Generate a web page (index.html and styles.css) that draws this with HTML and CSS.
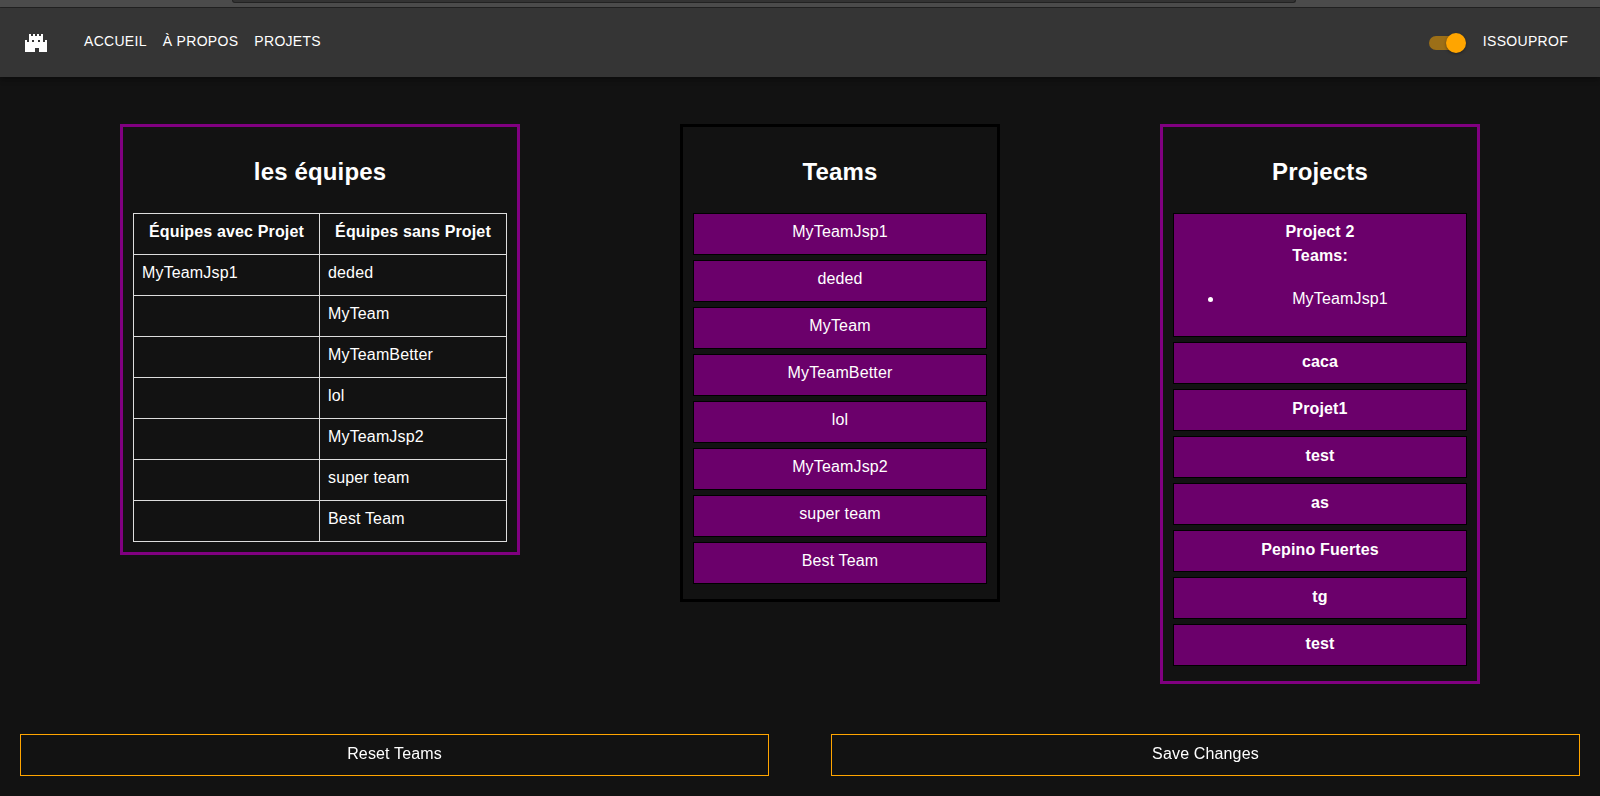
FILE: index.html
```html
<html>
<head>
    <title>Teams</title>
    <link rel="stylesheet" href="styles.css">
</head>
<body>
    <div class="browserStrip"><div class="browserTab"></div></div>
    <header class="navbar">
        <svg class="logo" width="22" height="18" viewBox="0 0 22 18" shape-rendering="crispEdges">
            <path fill="#fff" d="M4 0h2v2h2V0h2v2h2V0h2v2h2V0h2v6h-2v0H4V0zM0 6h2v2h2V6h14v2h2V6h2v12h-8v-4h-4v4H0V6z"/>
            <rect fill="#353535" x="7" y="6" width="2" height="2"/>
            <rect fill="#353535" x="13" y="6" width="2" height="2"/>
        </svg>
        <nav class="navLinks">
            <a>Accueil</a>
            <a>À propos</a>
            <a>Projets</a>
        </nav>
        <div class="navRight">
            <div class="switch"><span class="switchThumb"></span></div>
            <a class="userName">IssouProf</a>
        </div>
    </header>

    <main class="columns">
        <section class="panel wide">
            <h2>les équipes</h2>
            <table class="teamTable">
                <thead>
                    <tr>
                        <th>Équipes avec Projet</th>
                        <th>Équipes sans Projet</th>
                    </tr>
                </thead>
                <tbody>
                    <tr><td>MyTeamJsp1</td><td>deded</td></tr>
                    <tr><td></td><td>MyTeam</td></tr>
                    <tr><td></td><td>MyTeamBetter</td></tr>
                    <tr><td></td><td>lol</td></tr>
                    <tr><td></td><td>MyTeamJsp2</td></tr>
                    <tr><td></td><td>super team</td></tr>
                    <tr><td></td><td>Best Team</td></tr>
                </tbody>
            </table>
        </section>

        <section class="panel black">
            <h2>Teams</h2>
            <div class="item">MyTeamJsp1</div>
            <div class="item">deded</div>
            <div class="item">MyTeam</div>
            <div class="item">MyTeamBetter</div>
            <div class="item">lol</div>
            <div class="item">MyTeamJsp2</div>
            <div class="item">super team</div>
            <div class="item">Best Team</div>
        </section>

        <section class="panel">
            <h2>Projects</h2>
            <div class="item project">
                <div class="projectName">Project 2</div>
                <div class="projectName">Teams:</div>
                <ul class="projectTeams">
                    <li>MyTeamJsp1</li>
                </ul>
            </div>
            <div class="item project"><div class="projectName">caca</div></div>
            <div class="item project"><div class="projectName">Projet1</div></div>
            <div class="item project"><div class="projectName">test</div></div>
            <div class="item project"><div class="projectName">as</div></div>
            <div class="item project"><div class="projectName">Pepino Fuertes</div></div>
            <div class="item project"><div class="projectName">tg</div></div>
            <div class="item project"><div class="projectName">test</div></div>
        </section>
    </main>

    <div class="actions">
        <button class="actionButton">Reset Teams</button>
        <button class="actionButton">Save Changes</button>
    </div>
</body>
</html>
```

FILE: styles.css
```css
* {
    box-sizing: border-box;
}

html,
body {
    height: 100%;
}

body {
    margin: 0;
    background-color: #121212;
    color: #fff;
    font-family: "Liberation Sans", Arial, sans-serif;
    font-size: 16px;
    line-height: 24px;
    letter-spacing: 0.15px;
    overflow: hidden;
}

.browserStrip {
    height: 8px;
    background-color: #4b4b4b;
    border-bottom: 1px solid #222;
    padding: 0 304px 0 232px;
}

.browserTab {
    height: 3px;
    background-color: #333;
    border: 1px solid #222;
    border-top: 0;
    border-radius: 0 0 3px 3px;
}

.navbar {
    display: flex;
    align-items: center;
    height: 69px;
    padding: 0 32px 0 25px;
    background-color: #353535;
    box-shadow: 0 2px 4px -1px rgba(0, 0, 0, 0.2), 0 4px 5px 0 rgba(0, 0, 0, 0.14);
    font-size: 14px;
    letter-spacing: 0.3px;
    text-transform: uppercase;
}

.logo {
    margin-right: 37px;
}

.navLinks {
    display: flex;
    gap: 16px;
    padding-bottom: 3px;
}

.navRight {
    display: flex;
    align-items: center;
    gap: 20px;
    margin-left: auto;
}

.userName {
    padding-bottom: 3px;
}

.switch {
    position: relative;
    width: 34px;
    height: 14px;
    border-radius: 7px;
    background-color: #9c6f17;
}

.switchThumb {
    position: absolute;
    top: -3px;
    right: -3px;
    width: 20px;
    height: 20px;
    border-radius: 50%;
    background-color: #ffa500;
    box-shadow: 0 1px 3px rgba(0, 0, 0, 0.4);
}

.columns {
    display: flex;
    justify-content: space-between;
    align-items: flex-start;
    padding: 47px 120px 0;
}

.panel {
    width: 320px;
    padding: 10px;
    border: 3px solid #800080;
}

.panel.wide {
    width: 400px;
}

.panel.black {
    border-color: #000;
}

.panel h2 {
    margin: 20px 0 27px;
    font-size: 24px;
    line-height: 29px;
    text-align: center;
}

.item {
    min-height: 42px;
    margin-bottom: 5px;
    padding: 6px 10px;
    background-color: #6b006b;
    border: 1px solid #000;
    text-align: center;
}

.project + .project {
    padding-top: 7px;
}

.projectName {
    font-weight: bold;
}

.projectTeams {
    margin: 19px 0;
    padding-left: 40px;
}

.teamTable {
    width: 100%;
    border-collapse: collapse;
}

.teamTable th,
.teamTable td {
    height: 41px;
    padding: 6px 8px 10px;
    border: 1px solid #ddd;
    text-align: left;
}

.teamTable th {
    text-align: center;
}

.actions {
    display: grid;
    grid-template-columns: 749px 749px;
    justify-content: space-between;
    padding: 0 20px;
    position: fixed;
    left: 0;
    right: 0;
    bottom: 20px;
}

.actionButton {
    height: 42px;
    padding-bottom: 4px;
    background-color: transparent;
    border: 1px solid #ffa500;
    color: #fff;
    font-family: inherit;
    font-size: 16px;
    letter-spacing: inherit;
}
```
